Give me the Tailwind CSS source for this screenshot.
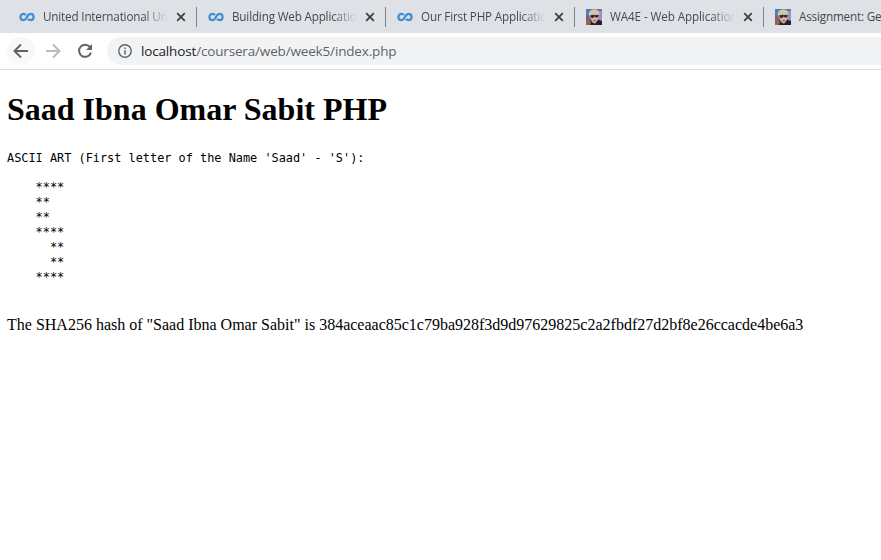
<!DOCTYPE html>
<html lang="en">
<head>
<meta charset="utf-8">
<title>Saad Ibna Omar Sabit PHP</title>
<script src="https://cdn.jsdelivr.net/npm/@tailwindcss/browser@4"></script>
</head>
<body class="w-[881px] h-[560px] overflow-hidden bg-white text-black">
<svg class="hidden">
  <symbol id="loop" viewBox="0 0 16 16"><path d="M6.9 6C6.3 5.2 5.5 4.8 4.5 4.8C2.7 4.8 1.4 6.2 1.4 8C1.4 9.8 2.7 11.1 4.5 11.1C8 11.1 7.9 4.8 11.4 4.8C13.3 4.8 14.6 6.2 14.6 8C14.6 9.8 13.3 11.1 11.4 11.1C10.4 11.1 9.6 10.7 9 9.9" fill="none" stroke="#438fd2" stroke-width="2.3"/></symbol>
  <symbol id="close" viewBox="0 0 10 10"><path d="M1.2 1.2L8.8 8.8M8.8 1.2L1.2 8.8" fill="none" stroke="#3c4043" stroke-width="1.8"/></symbol>
  <symbol id="face" viewBox="0 0 16 16">
    <rect width="16" height="16" fill="#6878a8"/>
    <path d="M0 0H5L3 6L0 9Z" fill="#4b7fc0"/><path d="M0 6H3V11H0Z" fill="#8a5a86"/><path d="M12.5 2H16V11H12Z" fill="#9a8fc0"/><path d="M0 11L4 10L6 16H0Z" fill="#99604a"/>
    <path d="M3.5 5H12.5L12.2 10.5L9.5 14.2L6.5 13.5L4 9Z" fill="#dcae9c"/>
    <path d="M2.8 6C2.8 2 5 .6 8.5 .6C12 .6 13.8 3 13.3 6.2L9 4.8L3.6 6.8Z" fill="#cfc9a8"/>
    <path d="M4 6.4L7.7 5.8L8.5 6.3L12.8 5.8L12 8.3L9.8 8.4L8.6 7.2L7.2 9L5 8.8Z" fill="#252632"/>
    <path d="M3.5 8L6 13.2L9 15L12.4 10.5L16 12.5V16H4L5 13Z" fill="#20222c"/><path d="M7.6 11.7H9.8" stroke="#873d3a"/>
  </symbol>
</svg>
<header class="w-[881px] overflow-hidden font-['Open_Sans','Noto_Sans',sans-serif]">
  <nav class="flex h-[33px] bg-[#dee1e6] text-[11.7px] leading-4 tracking-[-0.18px] text-[#45494d]">
    <div class="flex w-[197px] shrink-0 items-center pl-[19px]">
      <svg class="size-4 shrink-0"><use href="#loop"/></svg>
      <span class="ml-2 w-[125px] overflow-hidden pb-0.5 whitespace-nowrap [mask-image:linear-gradient(to_right,black_80%,transparent)]">United International Uni</span>
      <svg class="ml-[8px] size-[10px] shrink-0"><use href="#close"/></svg>
      <i class="ml-auto h-5 w-px bg-[#808387]"></i>
    </div>
    <div class="flex w-[189px] shrink-0 items-center pl-[11px]">
      <svg class="size-4 shrink-0"><use href="#loop"/></svg>
      <span class="ml-2 w-[125px] overflow-hidden pb-0.5 whitespace-nowrap [mask-image:linear-gradient(to_right,black_80%,transparent)]">Building Web Applicatio</span>
      <svg class="ml-[8px] size-[10px] shrink-0"><use href="#close"/></svg>
      <i class="ml-auto h-5 w-px bg-[#808387]"></i>
    </div>
    <div class="flex w-[189px] shrink-0 items-center pl-[11px]">
      <svg class="size-4 shrink-0"><use href="#loop"/></svg>
      <span class="ml-2 w-[125px] overflow-hidden pb-0.5 whitespace-nowrap [mask-image:linear-gradient(to_right,black_80%,transparent)]">Our First PHP Applicatio</span>
      <svg class="ml-[8px] size-[10px] shrink-0"><use href="#close"/></svg>
      <i class="ml-auto h-5 w-px bg-[#808387]"></i>
    </div>
    <div class="flex w-[189px] shrink-0 items-center pl-[11px]">
      <svg class="size-4 shrink-0"><use href="#face"/></svg>
      <span class="ml-2 w-[125px] overflow-hidden pb-0.5 whitespace-nowrap tracking-[-0.1px] [mask-image:linear-gradient(to_right,black_80%,transparent)]">WA4E - Web Application</span>
      <svg class="ml-[8px] size-[10px] shrink-0"><use href="#close"/></svg>
      <i class="ml-auto h-5 w-px bg-[#808387]"></i>
    </div>
    <div class="flex min-w-0 flex-1 items-center pl-[11px]">
      <svg class="size-4 shrink-0"><use href="#face"/></svg>
      <span class="ml-2 pb-0.5 whitespace-nowrap">Assignment: Ge</span>
    </div>
  </nav>
  <div class="flex h-[37px] border-b border-[#dadce0] pt-1 pl-[7px]">
    <div class="flex size-7 shrink-0 items-center justify-center rounded-full bg-[#f8f8f9]"><svg class="size-4" viewBox="0 0 16 16" fill="none" stroke="#5f6368" stroke-width="2"><path d="M15 8H2M8 1.5L1.5 8L8 14.5"/></svg></div>
    <div class="ml-1 flex size-7 shrink-0 items-center justify-center"><svg class="size-4" viewBox="0 0 16 16" fill="none" stroke="#babcbe" stroke-width="2"><path d="M1 8H14M8 1.5L14.5 8L8 14.5"/></svg></div>
    <div class="ml-1 flex size-7 shrink-0 items-center justify-center"><svg class="size-4" viewBox="0 0 16 16"><path d="M13.2 4.3A6.1 6.1 0 1 0 14 9.5" fill="none" stroke="#5f6368" stroke-width="2"/><path d="M15 1V7H9Z" fill="#5f6368"/></svg></div>
    <div class="ml-[8px] flex h-7 min-w-0 flex-1 items-center rounded-l-full bg-[#f1f3f4] pl-[11px]">
      <svg class="size-[14px] shrink-0" viewBox="0 0 14 14"><circle cx="7" cy="7" r="6.2" fill="none" stroke="#5f6368" stroke-width="1.4"/><path d="M7 6.2V10.5M7 3.4V4.9" stroke="#5f6368" stroke-width="1.5"/></svg>
      <span class="ml-[9px] whitespace-nowrap text-[13.5px] leading-5 tracking-[-0.16px] text-[#5f6368]"><span class="text-[#202124]">localhost</span>/coursera/web/week5/index.php</span>
    </div>
  </div>
</header>
<main class="pl-[7px]">
  <h1 class="mt-[21px] font-['Liberation_Serif',serif] text-[32px] leading-[37px] font-bold">Saad Ibna Omar Sabit PHP</h1>
  <pre class="mt-[23px] font-['DejaVu_Sans_Mono',monospace] text-[11.88px] leading-[15px]">ASCII ART (First letter of the Name 'Saad' - 'S'):</pre>
  <pre class="mt-[14px] font-['DejaVu_Sans_Mono',monospace] text-[11.88px] leading-[15px]">    ****
    **
    **
    ****
      **
      **
    ****
</pre>
  <p class="mt-[31px] font-['Liberation_Serif',serif] text-[16px] leading-[18px] whitespace-nowrap">The SHA256 hash of "Saad Ibna Omar Sabit" is 384aceaac85c1c79ba928f3d9d97629825c2a2fbdf27d2bf8e26ccacde4be6a3</p>
</main>
</body>
</html>
